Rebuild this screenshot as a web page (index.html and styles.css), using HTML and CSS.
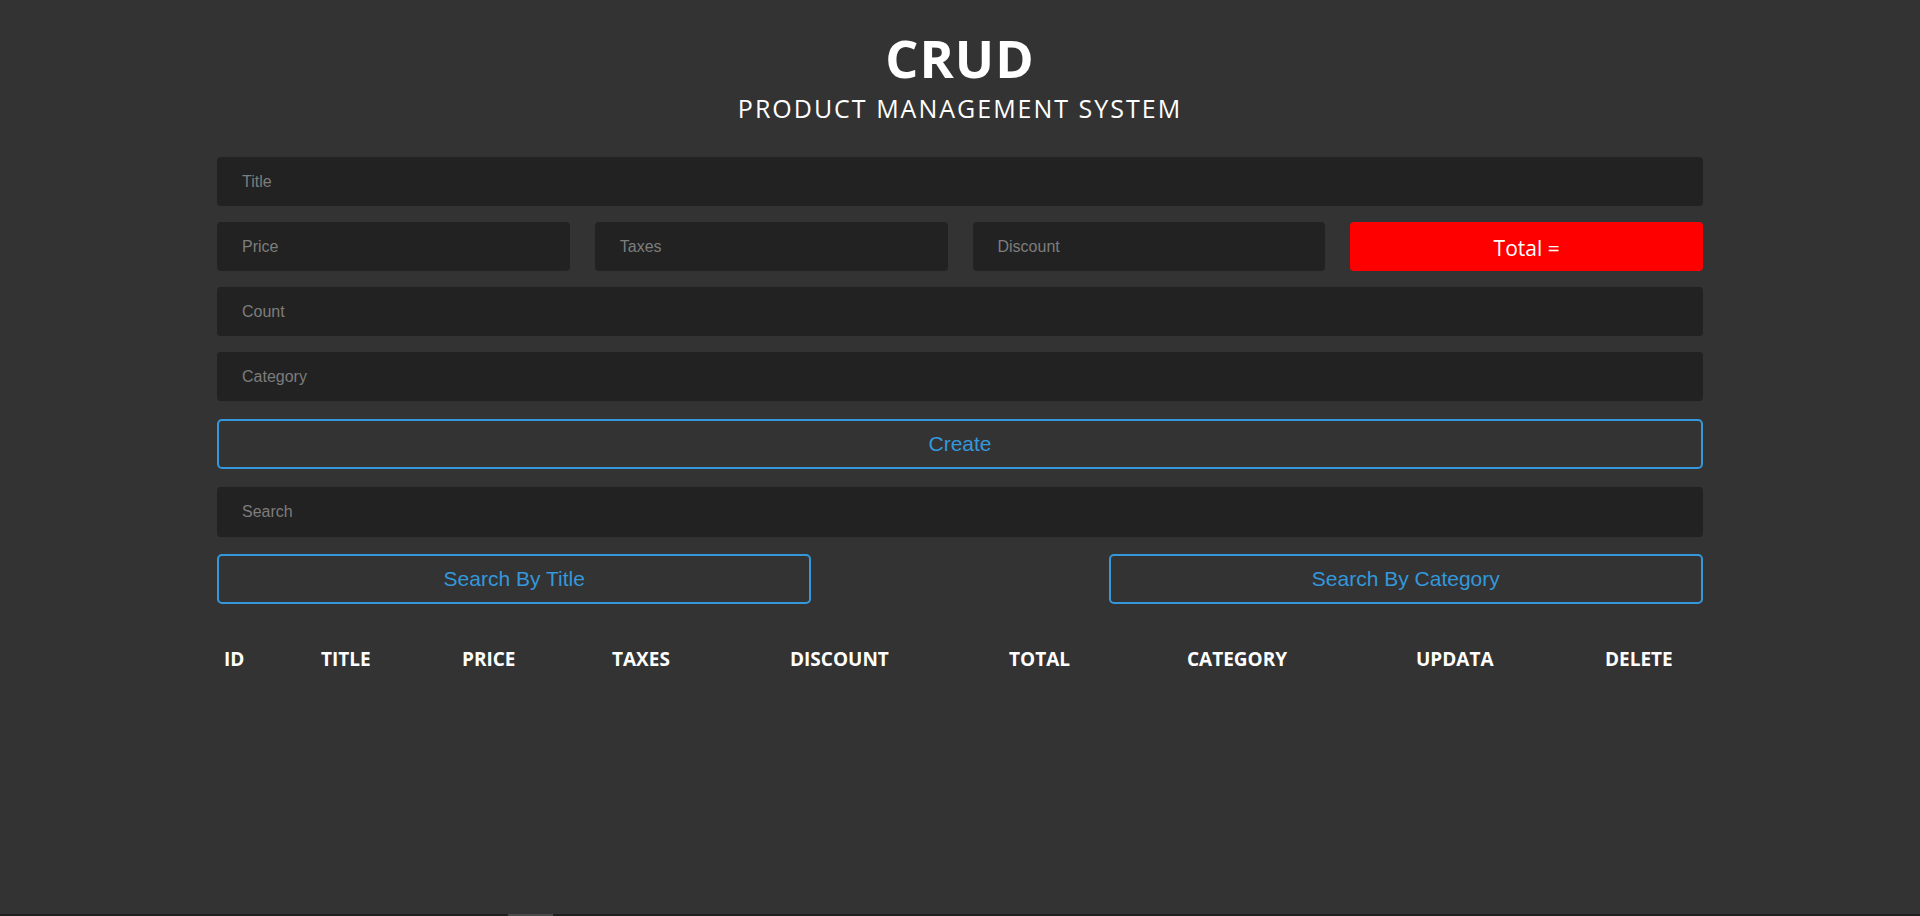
FILE: index.html
```html
<!DOCTYPE html>
<html lang="en">
<head>
<meta charset="UTF-8">
<title>CRUD</title>
<link rel="stylesheet" href="styles.css">
</head>
<body>
<div class="crud">
  <div class="head">
    <h2 class="head-title">CRUD</h2>
    <p class="head-sub">PRODUCT MANAGEMENT SYSTEM</p>
  </div>
  <div class="inputs">
    <input class="field" type="text" placeholder="Title">
    <div class="price">
      <input class="field" type="number" placeholder="Price">
      <input class="field" type="number" placeholder="Taxes">
      <input class="field" type="number" placeholder="Discount">
      <small class="total">Total =</small>
    </div>
    <input class="field" type="number" placeholder="Count">
    <input class="field" type="text" placeholder="Category">
    <button class="btn btn-create">Create</button>
  </div>
  <div class="outputs">
    <input class="field search" type="text" placeholder="Search">
    <div class="search-btns">
      <button class="btn btn-search">Search By Title</button>
      <button class="btn btn-search">Search By Category</button>
    </div>
    <table class="tbl">
      <colgroup>
        <col class="c1"><col class="c2"><col class="c3"><col class="c4"><col class="c5"><col class="c6"><col class="c7"><col class="c8"><col class="c9">
      </colgroup>
      <thead>
        <tr>
          <th>id</th>
          <th>title</th>
          <th>price</th>
          <th>taxes</th>
          <th>discount</th>
          <th>total</th>
          <th>category</th>
          <th>updata</th>
          <th>delete</th>
        </tr>
      </thead>
      <tbody></tbody>
    </table>
  </div>
</div>
<div class="hscroll"><div class="hscroll-thumb"></div></div>
</body>
</html>
```
FILE: styles.css
```css
html, body {
  margin: 0;
  padding: 0;
}
body {
  background: #333333;
  color: #ffffff;
  font-family: "Open Sans", "Noto Sans", sans-serif;
  min-height: 916px;
}
.crud {
  width: 1486px;
  margin: 0 auto;
}
.head {
  text-align: center;
  padding-top: 24px;
}
.head-title {
  margin: 0;
  font-size: 52px;
  font-weight: 700;
  letter-spacing: 1px;
  line-height: 68px;
}
.head-sub {
  margin: -1px 0 0 0;
  font-size: 25px;
  font-weight: 400;
  letter-spacing: 2px;
  line-height: normal;
}
.inputs {
  margin-top: 32px;
  display: flex;
  flex-direction: column;
  gap: 16px;
}
.field {
  display: block;
  width: 100%;
  height: 49px;
  box-sizing: border-box;
  padding: 0 25px;
  border: none;
  border-radius: 4px;
  background: #222222;
  color: #ffffff;
  font-family: "Liberation Sans", Arial, sans-serif;
  font-size: 16px;
  outline: none;
  margin: 0;
}
.field::placeholder {
  color: #7d7d7d;
}
.field::-webkit-outer-spin-button,
.field::-webkit-inner-spin-button {
  -webkit-appearance: none;
  margin: 0;
}
.price {
  display: grid;
  grid-template-columns: repeat(4, 1fr);
  gap: 25px;
}
.total {
  display: flex;
  align-items: center;
  justify-content: center;
  height: 49px;
  padding-top: 2px;
  box-sizing: border-box;
  background: #ff0000;
  border-radius: 4px;
  color: #ffffff;
  font-family: "Open Sans", "Noto Sans", sans-serif;
  font-size: 21px;
}
.btn {
  display: block;
  height: 50px;
  box-sizing: border-box;
  background: transparent;
  border: 2px solid #3498db;
  border-radius: 5px;
  color: #3498db;
  font-family: "Liberation Sans", Arial, sans-serif;
  font-size: 21px;
  cursor: pointer;
  padding: 0;
}
.btn-create {
  width: 100%;
  margin-top: 2px;
}
.outputs {
  margin-top: 18px;
}
.search {
  height: 50px;
}
.search-btns {
  display: flex;
  justify-content: space-between;
  margin-top: 17px;
}
.btn-search {
  width: 40%;
}
.tbl {
  width: 100%;
  margin-top: 41px;
  border-collapse: collapse;
  table-layout: fixed;
}
.c1 { width: 97px; }
.c2 { width: 141px; }
.c3 { width: 150px; }
.c4 { width: 178px; }
.c5 { width: 219px; }
.c6 { width: 178px; }
.c7 { width: 229px; }
.c8 { width: 189px; }
.c9 { width: 105px; }
.tbl th {
  text-align: left;
  padding: 1px 0 1px 7px;
  font-size: 19px;
  font-weight: 700;
  text-transform: uppercase;
  line-height: normal;
}
.hscroll {
  position: fixed;
  left: 0;
  right: 0;
  bottom: 0;
  height: 2px;
  background: #1f1f1f;
}
.hscroll-thumb {
  position: absolute;
  left: 508px;
  width: 45px;
  top: 0;
  bottom: 0;
  background: #4a4a4a;
}
```
